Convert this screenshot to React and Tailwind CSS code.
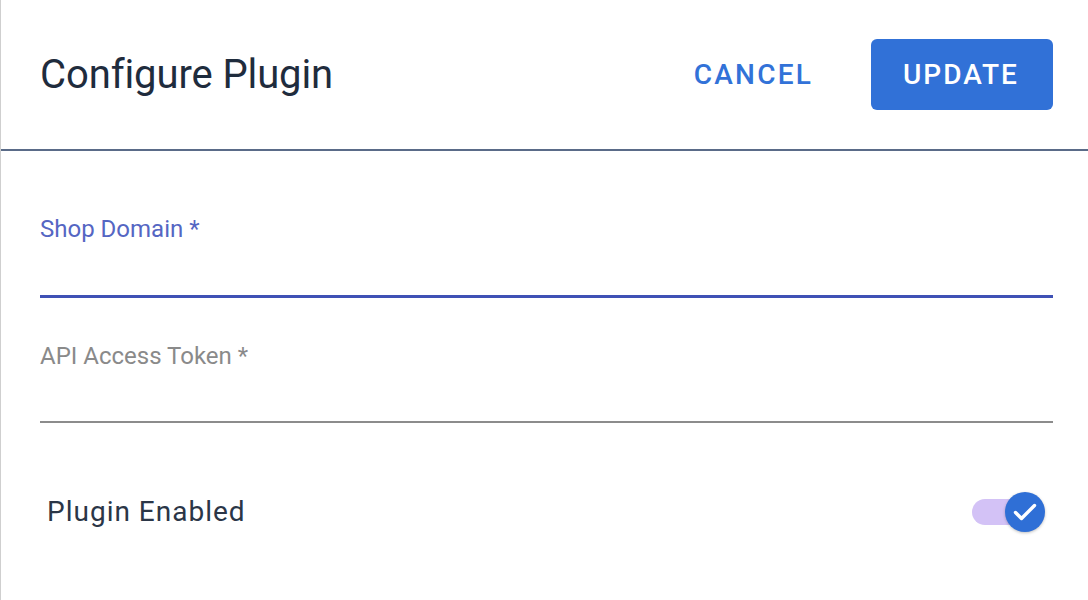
export default function App() {
  const font = { fontFamily: 'Roboto, "Liberation Sans", sans-serif' };
  return (
    <div className="w-[1088px] h-[600px] bg-white border-l border-[#cfcfcf] overflow-hidden" style={font}>
      {/* Header */}
      <div className="h-[151px] flex items-center justify-between pl-[39px] pr-[35px] border-b-2 border-[#5a6b88]">
        <h1 className="text-[40px] leading-none text-[#1f2c3d] font-normal tracking-[-0.1px] pt-[1px]">Configure Plugin</h1>
        <div className="flex items-center gap-[26px]">
          <button className="h-[71px] px-[32px] text-[28px] font-medium tracking-[2.2px] text-[#3272d8] leading-none">
            CANCEL
          </button>
          <button className="h-[71px] w-[182px] rounded-[6px] bg-[#3171d7] text-white text-[28px] font-medium tracking-[2px] leading-none pr-[2px]">
            UPDATE
          </button>
        </div>
      </div>

      {/* Form */}
      <div className="pl-[39px] pr-[35px]">
        <div className="mt-[66px]">
          <label className="block text-[24px] leading-[24px] text-[#5566c3]">Shop Domain *</label>
          <div className="mt-[54px] h-[3px] bg-[#3f51b5]" />
        </div>
        <div className="mt-[46px]">
          <label className="block text-[24px] leading-[24px] text-[#8a8a8a]">API Access Token *</label>
          <div className="mt-[53px] h-[2px] bg-[#8c8c8c]" />
        </div>
        <div className="mt-[69px] h-[40px] flex items-center justify-between pl-[7px] pr-[8px]">
          <span className="text-[28px] leading-[28px] tracking-[1px] text-[#2b3647]">Plugin Enabled</span>
          <div className="relative w-[73px] h-[40px] flex items-center">
            <div className="w-[64px] h-[26px] rounded-full bg-[#d3c2f6]" />
            <div className="absolute right-0 top-0 w-[40px] h-[40px] rounded-full bg-[#2f6fd6] flex items-center justify-center shadow-[0_1px_3px_rgba(0,0,0,0.25)]">
              <svg width="32" height="32" viewBox="0 0 32 32" fill="none">
                <path d="M6.5 16.5l6 6L25.5 9.5" stroke="white" strokeWidth="3.4" strokeLinecap="round" strokeLinejoin="round" />
              </svg>
            </div>
          </div>
        </div>
      </div>
    </div>
  );
}
